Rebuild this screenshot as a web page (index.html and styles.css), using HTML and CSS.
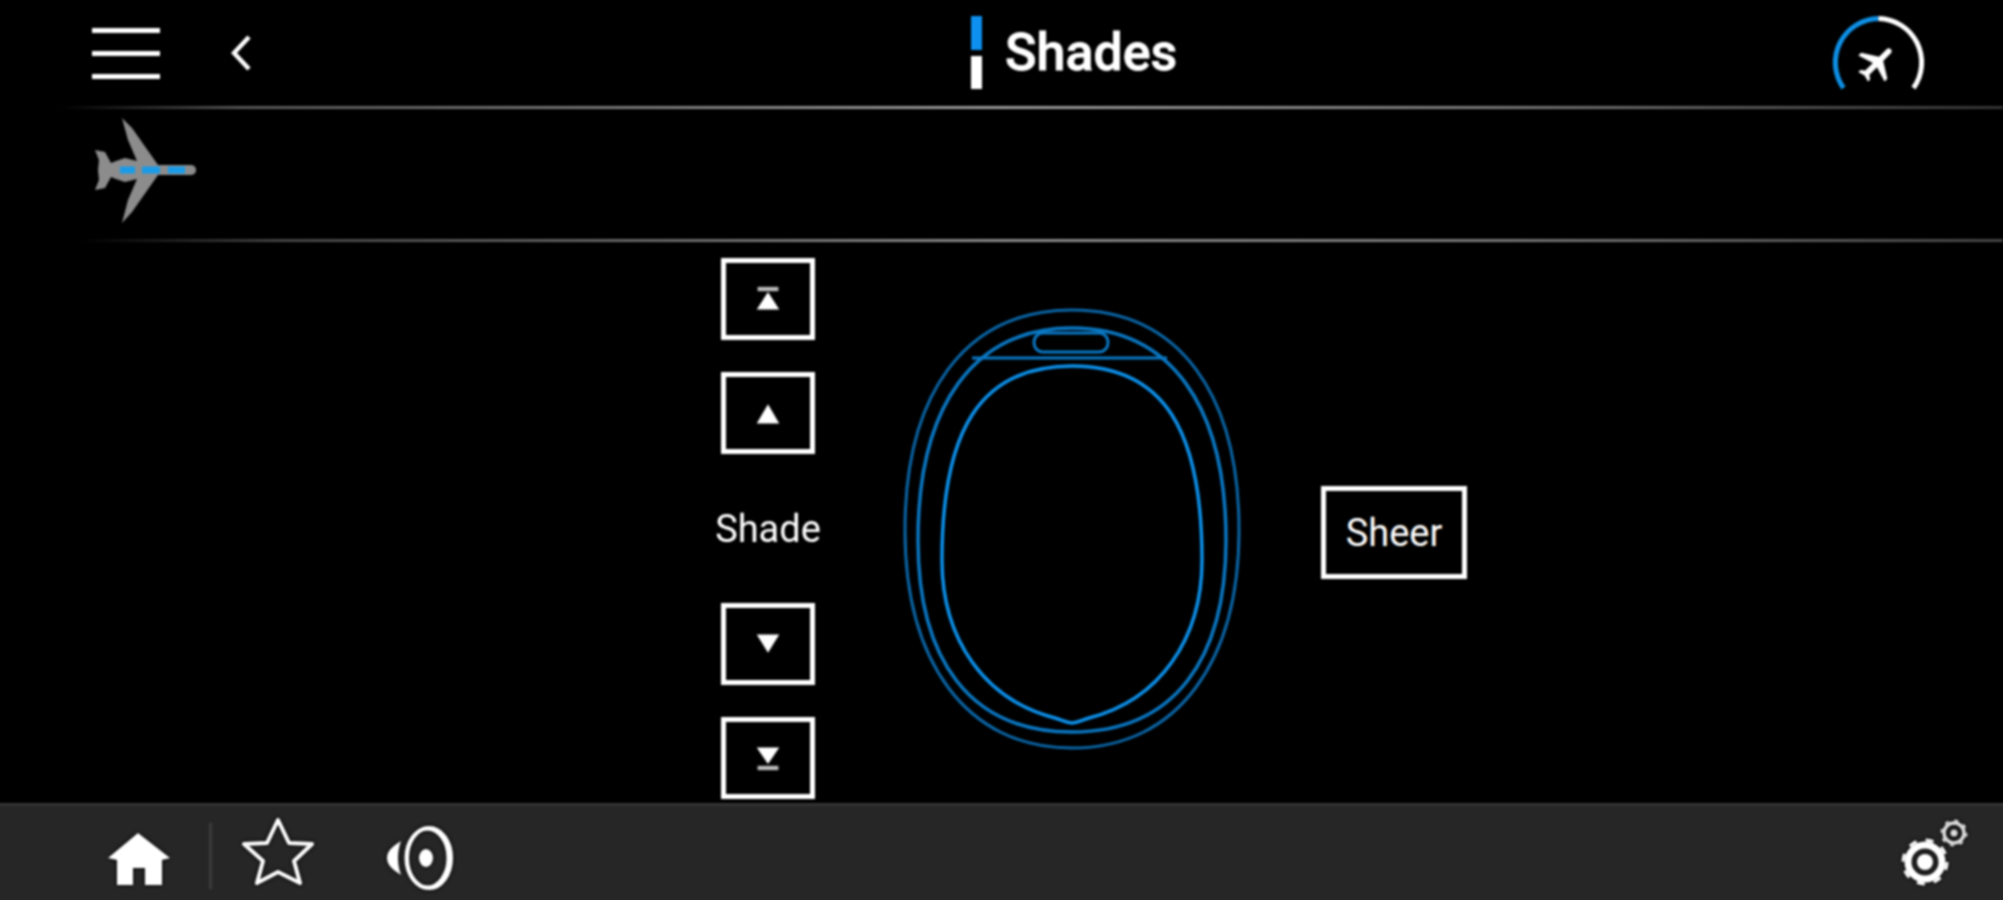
FILE: index.html
```html
<!DOCTYPE html>
<html>
<head>
  <meta charset="UTF-8">
  <title>Shades</title>
  <link rel="stylesheet" href="styles.css">
</head>
<body>
  <div class="screen">
    <header class="top-bar">
      <div class="menu-btn"><span></span><span></span><span></span></div>
      <svg class="back-btn" viewBox="231 30 22 46">
        <path d="M249 37 L234 53 L249 69" fill="none" stroke="#fff" stroke-width="4.5"/>
      </svg>
      <div class="title">
        <div class="tick"><span class="tick-blue"></span><span class="tick-white"></span></div>
        <h1>Shades</h1>
      </div>
      <svg class="gauge" viewBox="1825 10 106 84">
        <path d="M1843.5 88 A44 44 0 0 1 1878.5 18.5" fill="none" stroke="#0e90e6" stroke-width="5"/>
        <path d="M1878.5 18.5 A44 44 0 0 1 1913.5 88" fill="none" stroke="#fff" stroke-width="5"/>
        <g transform="translate(1877 63) rotate(45) scale(1.95) translate(-11.5 -12)">
          <path d="M21 16v-2l-8-5V3.5c0-.83-.67-1.5-1.5-1.5S10 2.67 10 3.5V9l-8 5v2l8-2.5V19l-2 1.5V22l3.5-1 3.5 1v-1.5L13 19v-5.5l8 2.5z" fill="#fff"/>
        </g>
      </svg>
    </header>
    <div class="rule"></div>

    <div class="plane-row">
      <svg class="plane" viewBox="92 116 106 110">
        <path fill="#8c8c8c" d="M196 170 C196 166 193 165 190 165 L158 165 L132 128 L122 118 L128 140 L137 161 L125 158 L116 161 L111 163 L105 152 L95 150 L99 160 L98 170 L99 180 L95 190 L105 188 L111 177 L116 179 L125 182 L137 179 L128 200 L122 223 L132 212 L158 175 L190 175 C193 175 196 174 196 170 Z"/>
        <path d="M120 170 H135 M142 170 H160 M168 170 H185" stroke="#1a9be8" stroke-width="7" fill="none"/>
      </svg>
    </div>
    <div class="rule rule-dim"></div>

    <main class="content">
      <div class="shade-col">
        <button class="square-btn">
          <svg viewBox="0 0 30 30"><path d="M3 1 H27 V6 H3 Z" fill="#bbb"/><path d="M15 7 L28 27 H2 Z" fill="#fff"/></svg>
        </button>
        <button class="square-btn">
          <svg viewBox="0 0 30 30"><path d="M15 5 L28 27 H2 Z" fill="#fff"/></svg>
        </button>
        <div class="shade-label">Shade</div>
        <button class="square-btn">
          <svg viewBox="0 0 30 30"><path d="M2 4 H28 L15 25 Z" fill="#fff"/></svg>
        </button>
        <button class="square-btn">
          <svg viewBox="0 0 30 30"><path d="M2 3 H28 L15 22 Z" fill="#fff"/><path d="M3 24 H27 V29 H3 Z" fill="#bbb"/></svg>
        </button>
      </div>

      <svg class="window" viewBox="902 306 340 446" fill="none">
        <path stroke="#0a66a8" stroke-width="3" d="M1072 310 C1180 310 1239 395 1239 530 C1239 660 1179 748 1072 748 C965 748 905 660 905 530 C905 395 964 310 1072 310 Z"/>
        <path stroke="#0a78c4" stroke-width="3.5" d="M1072 328 C1170 328 1226 405 1226 540 C1226 660 1174 732 1072 732 C970 732 918 660 918 540 C918 405 974 328 1072 328 Z"/>
        <path stroke="#0a78c4" stroke-width="3" d="M972 358 H1167"/>
        <rect x="1034" y="333" width="74" height="19" rx="9" stroke="#0a78c4" stroke-width="3"/>
        <path stroke="#0c90ea" stroke-width="3.5" d="M1072 366 C1164 366 1202 430 1202 560 C1202 640 1159 700 1089 718 C1082 720 1077 723 1072 723 C1067 723 1062 720 1055 718 C985 700 942 640 942 560 C942 430 980 366 1072 366 Z"/>
      </svg>

      <button class="sheer-btn">Sheer</button>
    </main>

    <footer class="bottom-bar">
      <svg class="icon home" viewBox="104 803 70 97">
        <path fill="#fff" d="M138 833 L170 858 L162 860 V885 H145 V868 H133 V885 H117 V860 L108 858 Z"/>
      </svg>
      <div class="sep"></div>
      <svg class="icon star" viewBox="238 803 80 97">
        <path fill="none" stroke="#fff" stroke-width="4" stroke-linejoin="round" d="M278 820 L289 843 L312 844 L294 861 L300 883 L278 872 L257 883 L263 861 L244 844 L267 843 Z"/>
      </svg>
      <svg class="icon speaker" viewBox="384 803 74 97">
        <ellipse cx="429" cy="858" rx="22" ry="30" fill="none" stroke="#fff" stroke-width="4"/>
        <ellipse cx="427" cy="858" rx="21" ry="29" fill="none" stroke="#fff" stroke-width="3"/>
        <ellipse cx="426" cy="858" rx="7" ry="9" fill="#fff"/>
        <path fill="#fff" d="M401 841 C393 846 387 851 387 858 C387 865 393 870 401 875 C397 864 397 852 401 841 Z"/>
      </svg>
      <svg class="icon gears" viewBox="1896 803 76 97" fill="none">
        <circle cx="1925" cy="862" r="17" stroke="#fff" stroke-width="7"/>
        <circle cx="1925" cy="862" r="22" stroke="#fff" stroke-width="3" stroke-dasharray="8 9.27"/>
        <circle cx="1925" cy="862" r="8" fill="#fff"/>
        <circle cx="1954" cy="833" r="10" stroke="#ddd" stroke-width="3.5"/>
        <circle cx="1954" cy="833" r="12.5" stroke="#ddd" stroke-width="2" stroke-dasharray="4 5.8"/>
        <circle cx="1954" cy="833" r="3.5" fill="#ddd"/>
      </svg>
    </footer>
  </div>
</body>
</html>
```

FILE: styles.css
```css
body {
  margin: 0;
  background: #000;
  color: #fff;
  font-family: Roboto, "Liberation Sans", sans-serif;
  overflow: hidden;
}

.screen {
  display: flex;
  flex-direction: column;
  height: 900px;
  filter: blur(0.8px);
}

/* top bar */
.top-bar {
  display: flex;
  align-items: flex-start;
  height: 106px;
  padding-left: 92px;
}
.menu-btn {
  display: flex;
  flex-direction: column;
  gap: 18px;
  width: 68px;
  margin-top: 28px;
}
.menu-btn span {
  height: 5px;
  background: #fff;
}
.back-btn {
  width: 22px;
  height: 46px;
  margin-top: 30px;
  margin-left: 71px;
}
.title {
  display: flex;
  margin-left: 718px;
  margin-top: 16px;
}
.tick {
  display: flex;
  flex-direction: column;
  gap: 6px;
  width: 11px;
}
.tick-blue {
  height: 34px;
  background: #0e90f0;
}
.tick-white {
  height: 33px;
  background: #fff;
}
.title h1 {
  margin: 4px 0 0 23px;
  font-size: 52px;
  line-height: 66px;
  font-weight: 500;
  -webkit-text-stroke: 0.8px #fff;
}
.gauge {
  width: 106px;
  height: 84px;
  margin-top: 10px;
  margin-left: 648px;
}

.rule {
  height: 3px;
  background: linear-gradient(to right, #000 3%, #555 12%, #9a9a9a 50%, #777 75%, #333 100%);
}
.rule-dim {
  background: linear-gradient(to right, #000 4%, #444 14%, #8a8a8a 50%, #777 75%, #444 100%);
}

.plane-row {
  display: flex;
  align-items: center;
  height: 130px;
  padding-left: 92px;
  padding-bottom: 6px;
  box-sizing: border-box;
}
.plane {
  width: 106px;
  height: 110px;
}

/* shade controls */
.content {
  display: flex;
  flex: 1;
  min-height: 0;
  padding-left: 716px;
}
.shade-col {
  display: flex;
  flex-direction: column;
  align-items: center;
  width: 104px;
  padding-top: 16px;
}
.square-btn {
  display: flex;
  align-items: center;
  justify-content: center;
  box-sizing: border-box;
  width: 94px;
  height: 82px;
  padding: 0;
  background: #000;
  border: 5px solid #fff;
}
.square-btn + .square-btn {
  margin-top: 32px;
}
.square-btn svg {
  width: 26px;
  height: 26px;
}
.shade-label {
  display: flex;
  align-items: center;
  height: 149px;
  font-size: 38px;
  color: #fff;
}
.window {
  width: 340px;
  height: 446px;
  margin-top: 64px;
  margin-left: 82px;
}
.sheer-btn {
  box-sizing: border-box;
  align-self: flex-start;
  width: 146px;
  height: 93px;
  margin-top: 244px;
  margin-left: 79px;
  padding: 0;
  background: #000;
  border: 5px solid #fff;
  color: #fff;
  font-family: inherit;
  font-size: 38px;
}

/* bottom bar, runs past the screen edge so the blur doesn't fade its sides */
.bottom-bar {
  display: flex;
  flex-shrink: 0;
  height: 97px;
  margin: 0 -6px -6px;
  padding: 0 0 6px 110px;
  background: #262626;
  box-shadow: inset 0 3px 0 #333;
}
.icon {
  height: 97px;
  filter: drop-shadow(0 0 2px #000);
}
.home {
  width: 70px;
}
.sep {
  width: 3px;
  height: 66px;
  margin-top: 20px;
  margin-left: 35px;
  background: #3a3a3a;
}
.star {
  width: 80px;
  margin-left: 26px;
}
.speaker {
  width: 74px;
  margin-left: 66px;
}
.gears {
  width: 76px;
  margin-left: auto;
  margin-right: 37px;
}
```
